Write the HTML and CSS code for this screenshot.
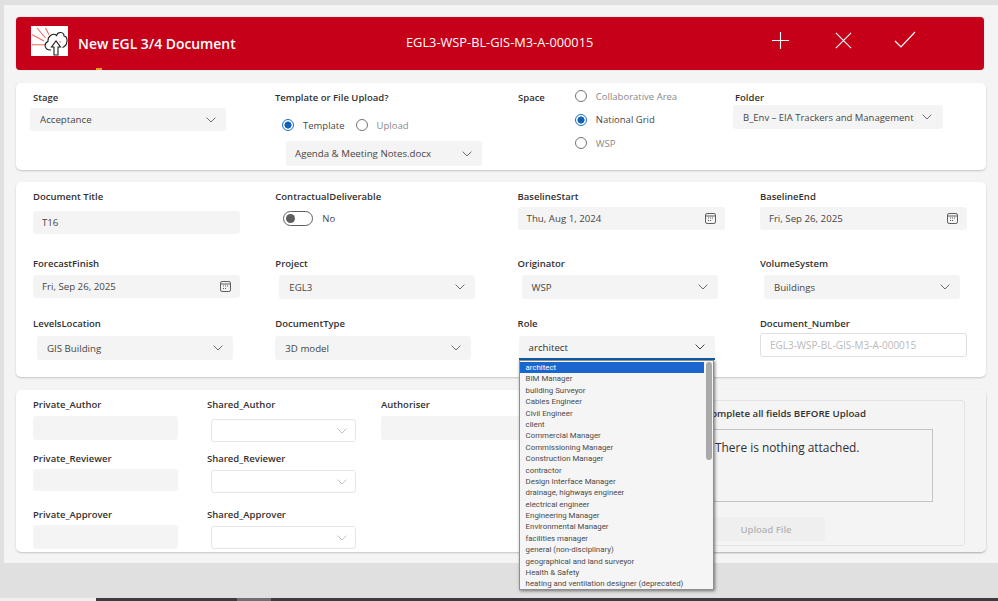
FILE: index.html
```html
<!DOCTYPE html>
<html lang="en">
<head>
<meta charset="utf-8">
<title>New EGL 3/4 Document</title>
<link rel="stylesheet" href="styles.css">
</head>
<body>
<svg class="defs" width="0" height="0" aria-hidden="true">
  <symbol id="chev" viewBox="0 0 10 6"><path d="M.6.6 5 5 9.4.6" fill="none" stroke="currentColor" stroke-width=".9"/></symbol>
  <symbol id="cal" viewBox="0 0 11 11"><rect x=".5" y=".5" width="10" height="10" rx="1.6" fill="none" stroke="currentColor"/><path d="M1 3h9" stroke="currentColor"/><path d="M3 5h1M5 5h1M7 5h1M3 7.5h1M5 7.5h1" stroke="currentColor"/></symbol>
</svg>
<main class="panel">
  <header class="banner">
    <svg class="logo" viewBox="0 0 37 30" aria-hidden="true">
      <rect width="37" height="30" fill="#fff"/>
      <path d="M1 18.700h13M1.300 8.700 13 15M6 2l8.500 10M14.500 2 18 8.700" stroke="#ee6a62" stroke-width="1.100" fill="none"/>
      <path d="M20 24c-6 .5-8-6-3-8.500-.5-5.500 5.500-9 8.500-6 1.500-4.500 7.500-3.500 7.500.5 4.500 1 4 9.500-1.500 11.500" fill="#fff" stroke="#1d1d1d" stroke-width="1.100"/>
      <path d="M23 29v-8h-2.500l4.500-6 4.500 6H27v8z" fill="#fff" stroke="#1d1d1d" stroke-width="1.100"/>
      <circle cx="29" cy="16" r=".8" fill="#ee6a62"/>
    </svg>
    <h1 class="banner-title">New EGL 3/4 Document</h1>
    <div class="banner-number">EGL3-WSP-BL-GIS-M3-A-000015</div>
    <div class="banner-actions">
      <svg class="act" viewBox="0 0 20 20" aria-label="Add"><path d="M10 1v18M1 10h18" stroke="#fff" stroke-width="1.200"/></svg>
      <svg class="act" viewBox="0 0 20 20" aria-label="Cancel"><path d="M2 2l16 16M18 2 2 18" stroke="#fff" stroke-width="1.200"/></svg>
      <svg class="act act-check" viewBox="0 0 22 20" aria-label="Save"><path d="M1 11l6 6L21 2" fill="none" stroke="#fff" stroke-width="1.200"/></svg>
    </div>
    <span class="banner-mark"></span>
  </header>

  <section class="card card-top">
    <div class="top-stage">
      <div class="label">Stage</div>
      <div class="select select-stage"><span>Acceptance</span><svg class="chev"><use href="#chev"/></svg></div>
    </div>
    <div class="top-template">
      <div class="label">Template or File Upload?</div>
      <div class="radio-row">
        <span class="radio on"></span><span class="radio-text">Template</span>
        <span class="radio"></span><span class="radio-text muted">Upload</span>
      </div>
      <div class="select select-template"><span>Agenda &amp; Meeting Notes.docx</span><svg class="chev"><use href="#chev"/></svg></div>
    </div>
    <div class="top-space">
      <div class="label">Space</div>
      <div class="radio-col">
        <div class="radio-item"><span class="radio"></span><span class="radio-text muted">Collaborative Area</span></div>
        <div class="radio-item"><span class="radio on"></span><span class="radio-text">National Grid</span></div>
        <div class="radio-item"><span class="radio"></span><span class="radio-text muted">WSP</span></div>
      </div>
    </div>
    <div class="top-folder">
      <div class="label">Folder</div>
      <div class="select select-folder"><span>B_Env – EIA Trackers and Management</span><svg class="chev"><use href="#chev"/></svg></div>
    </div>
  </section>

  <section class="card card-fields">
    <div class="field f-r1">
      <div class="label">Document Title</div>
      <div class="input input-title">T16</div>
    </div>
    <div class="field f-r1">
      <div class="label">ContractualDeliverable</div>
      <div class="toggle-row"><span class="toggle"><i></i></span><span class="radio-text">No</span></div>
    </div>
    <div class="field f-r1">
      <div class="label">BaselineStart</div>
      <div class="input date"><span>Thu, Aug 1, 2024</span><svg class="cal"><use href="#cal"/></svg></div>
    </div>
    <div class="field f-r1">
      <div class="label">BaselineEnd</div>
      <div class="input date"><span>Fri, Sep 26, 2025</span><svg class="cal"><use href="#cal"/></svg></div>
    </div>

    <div class="field f-r2">
      <div class="label">ForecastFinish</div>
      <div class="input date date-low"><span>Fri, Sep 26, 2025</span><svg class="cal"><use href="#cal"/></svg></div>
    </div>
    <div class="field f-r2">
      <div class="label">Project</div>
      <div class="select sel-r2"><span>EGL3</span><svg class="chev"><use href="#chev"/></svg></div>
    </div>
    <div class="field f-r2">
      <div class="label">Originator</div>
      <div class="select sel-r2"><span>WSP</span><svg class="chev"><use href="#chev"/></svg></div>
    </div>
    <div class="field f-r2">
      <div class="label">VolumeSystem</div>
      <div class="select sel-r2"><span>Buildings</span><svg class="chev"><use href="#chev"/></svg></div>
    </div>

    <div class="field">
      <div class="label">LevelsLocation</div>
      <div class="select sel-r3"><span>GIS Building</span><svg class="chev"><use href="#chev"/></svg></div>
    </div>
    <div class="field">
      <div class="label">DocumentType</div>
      <div class="select sel-r3 sel-flush"><span>3D model</span><svg class="chev"><use href="#chev"/></svg></div>
    </div>
    <div class="field">
      <div class="label">Role</div>
      <div class="role-wrap">
        <div class="select sel-role"><span>architect</span><svg class="chev chev-dark"><use href="#chev"/></svg></div>
        <div class="listbox">
          <ul class="options">
            <li class="selected">architect</li>
            <li>BIM Manager</li>
            <li>building Surveyor</li>
            <li>Cables Engineer</li>
            <li>Civil Engineer</li>
            <li>client</li>
            <li>Commercial Manager</li>
            <li>Commissioning Manager</li>
            <li>Construction Manager</li>
            <li>contractor</li>
            <li>Design Interface Manager</li>
            <li>drainage, highways engineer</li>
            <li>electrical engineer</li>
            <li>Engineering Manager</li>
            <li>Environmental Manager</li>
            <li>facilities manager</li>
            <li>general (non-disciplinary)</li>
            <li>geographical and land surveyor</li>
            <li>Health &amp; Safety</li>
            <li>heating and ventilation designer (deprecated)</li>
          </ul>
          <div class="scrolltrack"><div class="scrollthumb"></div></div>
        </div>
      </div>
    </div>
    <div class="field">
      <div class="label">Document_Number</div>
      <div class="input-outline">EGL3-WSP-BL-GIS-M3-A-000015</div>
    </div>
  </section>

  <section class="card card-people">
    <div class="people">
      <div class="person">
        <div class="label">Private_Author</div>
        <div class="input blank"></div>
      </div>
      <div class="person person-shared">
        <div class="label">Shared_Author</div>
        <div class="select combo"><svg class="chev chev-light"><use href="#chev"/></svg></div>
      </div>
      <div class="person">
        <div class="label">Authoriser</div>
        <div class="input blank"></div>
      </div>
      <div class="person">
        <div class="label">Private_Reviewer</div>
        <div class="input blank blank-short"></div>
      </div>
      <div class="person person-shared">
        <div class="label">Shared_Reviewer</div>
        <div class="select combo combo-r2"><svg class="chev chev-light"><use href="#chev"/></svg></div>
      </div>
      <div class="person"></div>
      <div class="person">
        <div class="label">Private_Approver</div>
        <div class="input blank blank-r3"></div>
      </div>
      <div class="person person-shared">
        <div class="label">Shared_Approver</div>
        <div class="select combo combo-r3"><svg class="chev chev-light"><use href="#chev"/></svg></div>
      </div>
      <div class="person"></div>
    </div>
    <div class="upload-zone">
      <div class="upload-box">
        <div class="upload-head">Complete all fields BEFORE Upload</div>
        <div class="attach">There is nothing attached.</div>
        <div class="upload-btn">Upload File</div>
      </div>
    </div>
  </section>
</main>
<footer class="taskbar"><span class="tb-start"></span><span class="tb-gap"></span><span class="tb-item"></span><span class="tb-rest"></span></footer>
</body>
</html>
```

FILE: styles.css
```css
* { box-sizing: border-box; }
html, body { margin: 0; height: 601px; overflow: hidden; }
body {
  background: #e0e0e0;
  font-family: "Open Sans", "Noto Sans", sans-serif;
  font-size: 9.5px;
  color: #323130;
  display: flex;
  flex-direction: column;
}
.defs { position: absolute; }
.panel {
  margin: 5px 0 0 4px;
  height: 558px;
  background: #f4f4f4;
  padding: 12px 12px 0 12px;
  display: flex;
  flex-direction: column;
}
.banner {
  position: relative;
  height: 53px;
  margin-right: 2px;
  background: #c50018;
  border-radius: 4px;
  box-shadow: 0 0 1px rgba(0,0,0,.3);
  display: flex;
  align-items: center;
  padding-left: 15px;
  color: #fff;
}
.logo { width: 37px; height: 30px; margin-top: -6px; flex: none; }
.banner-title { margin: 0 0 0 10px; width: 328px; font-size: 13.900px; font-weight: 600; white-space: nowrap; }
.banner-number { width: 365px; margin-top: -4px; font-size: 12.800px; white-space: nowrap; }
.banner-actions { display: flex; align-items: center; gap: 44px; margin-top: -7px; }
.act { width: 19px; height: 19px; }
.act-check { width: 22px; height: 20px; margin-left: -3px; }
.banner-mark { position: absolute; left: 80px; bottom: 0; width: 6px; height: 2px; background: #f0a020; }

.card {
  background: #fff;
  border-radius: 5px;
  box-shadow: 0 1px 2px rgba(0,0,0,.2);
}
.label { font-weight: 600; color: #323130; line-height: 12px; white-space: nowrap; }
.select, .input {
  background: #f4f4f4;
  border-radius: 3px;
  display: flex;
  align-items: center;
  justify-content: space-between;
  white-space: nowrap;
  color: #484644;
  font-size: 9.700px;
}
.select { padding: 0 10px; }
.input { padding: 0 9px; }
.chev { width: 10px; height: 6px; color: #605e5c; flex: none; }
.chev-dark { color: #323130; }
.chev-light { color: #b8b8b8; }
.cal { width: 11px; height: 11px; color: #605e5c; flex: none; }

.card-top { margin-top: 13px; height: 87px; display: flex; }
.top-stage { width: 259px; padding: 9px 0 0 17px; }
.select-stage { width: 196px; height: 23px; margin: 4px 0 0 -3px; }
.top-template { width: 243px; padding-top: 9px; }
.radio-row { display: flex; align-items: center; height: 16px; margin: 13px 0 0 7px; }
.radio-row .radio-text { margin: 0 11px 0 9px; }
.radio {
  width: 12px; height: 12px; flex: none;
  border: 1px solid #737373;
  border-radius: 50%;
  background: #fff;
}
.radio.on { border-color: #1a6fc9; background: radial-gradient(circle, #0f62b8 0 3.300px, #fff 3.800px); }
.radio-text { color: #484644; white-space: nowrap; }
.muted { color: #8a8886; }
.select-template { width: 196px; height: 25px; margin: 8px 0 0 11px; padding-left: 9px; }
.top-space { width: 217px; display: flex; padding-top: 9px; }
.radio-col { margin: -4px 0 0 30px; display: flex; flex-direction: column; gap: 7.500px; }
.radio-item { display: flex; align-items: center; height: 16px; gap: 9px; }
.top-folder { padding-top: 9px; margin-left: -2px; }
.top-folder .label { padding-left: 2px; }
.select-folder { width: 210px; height: 24px; margin-top: 1px; padding-right: 11px; font-size: 9.500px; }

.card-fields {
  margin-top: 12px;
  height: 195px;
  padding: 9px 0 0 17px;
  display: grid;
  grid-template-columns: repeat(4, 242.300px);
  grid-template-rows: 67px 60px auto;
  position: relative;
}
.field .label { margin-bottom: 3px; }
.input { width: 207px; height: 24px; }
.input-title { margin-top: 8px; height: 23px; }
.date-low { margin-top: 5px; height: 23px; }
.f-r1 .date { margin-top: 4px; height: 23px; }
.toggle-row { display: flex; align-items: center; gap: 9px; margin: 4px 0 0 8px; height: 22px; }
.toggle {
  width: 30px; height: 15px; flex: none;
  border: 1px solid #605e5c;
  border-radius: 8px;
  background: #fff;
  display: flex;
  align-items: center;
  padding-left: 2px;
}
.toggle i { width: 9px; height: 9px; border-radius: 50%; background: #605e5c; }
.sel-r2 { width: 196px; height: 24px; margin: 5px 0 0 4px; }
.sel-r3 { width: 196px; height: 24px; margin: 6px 0 0 4px; }
.sel-flush { margin-left: 0; }
.input-outline {
  width: 207px; height: 24px;
  margin-top: 2px;
  padding: 0 9px;
  border: 1px solid #e1e1e1;
  border-radius: 3px;
  color: #b9b9b9;
  font-size: 10px;
  display: flex;
  align-items: center;
  white-space: nowrap;
}
.role-wrap { position: relative; margin-top: 6px; }
.sel-role {
  width: 196px; height: 24px; margin-left: 1px;
  border-bottom: 2px solid #0f5fa8;
  color: #323130;
  border-radius: 3px 3px 0 0;
  padding: 0 10px;
}
.listbox {
  position: absolute;
  z-index: 5;
  left: 1px;
  top: 24px;
  width: 195px;
  height: 230px;
  background: #f5f5f5;
  border: 1px solid #8f8f8f;
  box-shadow: 1px 1px 3px rgba(0,0,0,.5);
  display: flex;
  padding: 1px 0 0 0;
}
.options {
  list-style: none;
  margin: 0;
  padding: 0;
  width: 186px;
  font-family: Roboto, "Open Sans", sans-serif;
  font-size: 7.850px;
  color: #4a4a4a;
}
.options li { height: 11.400px; line-height: 11.400px; padding-left: 6px; white-space: nowrap; }
.options li.selected { background: #1a66cf; color: #fff; }
.scrolltrack { flex: 1; padding: 0 1px; }
.scrollthumb { width: 6px; height: 98px; background: #a9a9a9; border-radius: 3px; margin-left: 1px; }

.card-people { margin-top: 13px; height: 162px; display: flex; overflow: visible; }
.people {
  width: 665px;
  padding: 9px 0 0 17px;
  display: grid;
  grid-template-columns: 174px 174px 1fr;
  grid-template-rows: 54px 56px auto;
}
.person .label { margin-bottom: 5px; }
.person .blank { width: 145px; height: 24px; }
.person .blank-short { height: 22px; margin-top: -1px; }
.person .blank-r3 { height: 24px; margin-top: -1px; }
.person-shared .combo {
  width: 145px; height: 23px;
  margin: 8px 0 0 4px;
  padding-right: 8px;
  background: #fff;
  border: 1px solid #e6e6e6;
  justify-content: flex-end;
}
.person-shared .combo-r2 { margin-top: 1px; }
.person-shared .combo-r3 { margin-top: 2px; }
.upload-zone {
  flex: 1;
  background: #f4f4f4;
  border-radius: 0 5px 5px 0;
  padding: 10px 21px 6px 14px;
  box-shadow: 0 1px 2px rgba(0,0,0,.12);
}
.upload-box {
  height: 146px;
  border: 1px solid #e3e3e3;
  border-radius: 3px;
  padding: 6px 0 0 9px;
}
.upload-head { font-weight: 600; font-size: 9.700px; line-height: 13px; white-space: nowrap; color: #323130; }
.attach {
  width: 233px; height: 73px;
  margin: 9px 0 0 -5px;
  border: 1px solid #c4c4c4;
  padding: 9px 0 0 14px;
  font-size: 11.900px;
  color: #323130;
  white-space: nowrap;
}
.upload-btn {
  width: 118px; height: 24px;
  margin: 15px 0 0 2px;
  background: #efefef;
  border-radius: 2px;
  color: #b6b6b6;
  font-weight: 600;
  display: flex;
  align-items: center;
  justify-content: center;
}

.taskbar { margin-top: auto; height: 3px; display: flex; flex: none; }
.tb-start { width: 96px; background: #efefef; }
.tb-gap { width: 141px; background: #3a3d40; }
.tb-item { width: 34px; background: #6e7073; }
.tb-rest { flex: 1; background: #3a3d40; }
```
